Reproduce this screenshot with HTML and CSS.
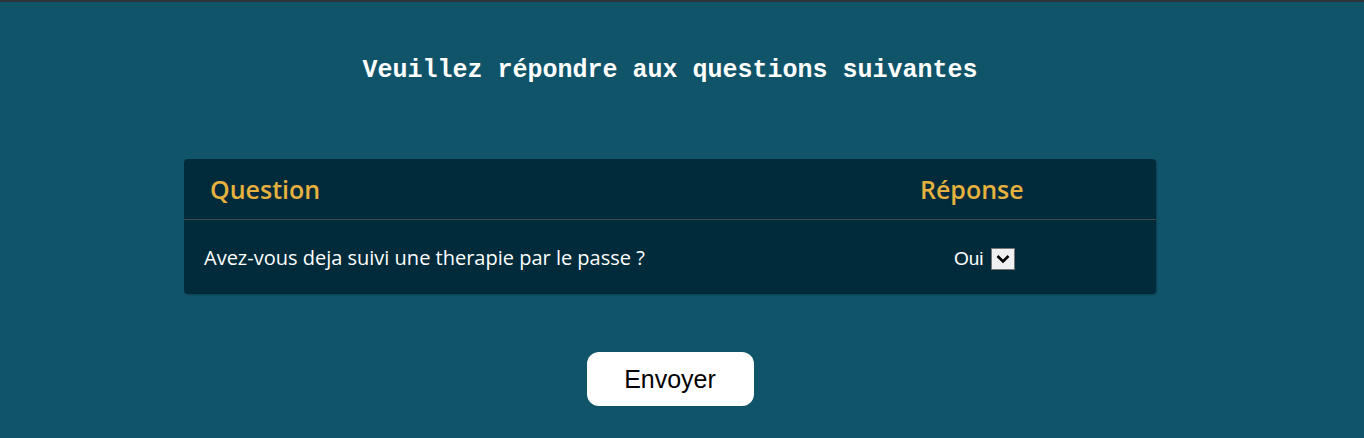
FILE: index.html
```html
<!DOCTYPE html>
<html lang="fr">
<head>
<meta charset="utf-8">
<title>Questionnaire</title>
<link rel="stylesheet" href="styles.css">
</head>
<body>
<div class="topbar"></div>
<main class="page">
  <h1 class="title">Veuillez répondre aux questions suivantes</h1>
  <div class="card">
    <div class="row head">
      <div class="c-q">Question</div>
      <div class="c-r">Réponse</div>
    </div>
    <div class="row body">
      <div class="c-q">Avez-vous deja suivi une therapie par le passe ?</div>
      <div class="c-r">
        <span class="select"><span class="sel-val">Oui</span><span class="sel-btn"><svg width="16" height="12" viewBox="0 0 16 12"><path d="M2.5 3 L8 8.5 L13.5 3" fill="none" stroke="#000" stroke-width="2.6"/></svg></span></span>
      </div>
    </div>
  </div>
  <div class="actions"><button class="send">Envoyer</button></div>
</main>
</body>
</html>
```
FILE: styles.css
```css
html, body { margin: 0; padding: 0; }
body {
  background: #10546a;
  height: 438px;
  overflow: hidden;
}
.topbar { height: 2px; background: #30353a; }
.page { display: flex; flex-direction: column; align-items: center; padding-right: 24px; }
.title {
  margin: 0;
  padding-top: 55px;
  height: 103px;
  box-sizing: border-box;
  font-family: "Liberation Mono", "Courier New", monospace;
  font-weight: bold;
  font-size: 25px;
  line-height: 28px;
  color: #ffffff;
}
.card {
  margin-top: 54px;
  width: 972px;
  background: #012b3a;
  border-radius: 4px;
  box-shadow: 1px 1px 2px rgba(0,0,0,0.25);
  font-family: "Open Sans", sans-serif;
}
.row { display: grid; align-items: center; }
.head {
  grid-template-columns: 736px 1fr;
  height: 60px;
  border-bottom: 1px solid #3f4a50;
  color: #e6b13e;
  font-weight: 600;
  font-size: 25px;
}
.head .c-q { padding-left: 26px; }
.body {
  grid-template-columns: 770px 1fr;
  height: 74px;
  color: #ffffff;
  font-size: 20px;
}
.body .c-q { padding-left: 20px; }
.select {
  display: inline-flex;
  align-items: center;
  gap: 7px;
  font-family: "Liberation Sans", Arial, sans-serif;
  font-size: 19px;
}
.sel-btn {
  width: 22px; height: 20px;
  background: #f0f0f0;
  border: 1px solid #767676;
  display: inline-flex; align-items: center; justify-content: center;
}
.actions { margin-top: 58px; }
.send {
  width: 167px; height: 54px;
  background: #ffffff;
  border: none;
  border-radius: 12px;
  font-family: "Liberation Sans", Arial, sans-serif;
  font-size: 25px;
  color: #000;
  padding: 0;
}
```
